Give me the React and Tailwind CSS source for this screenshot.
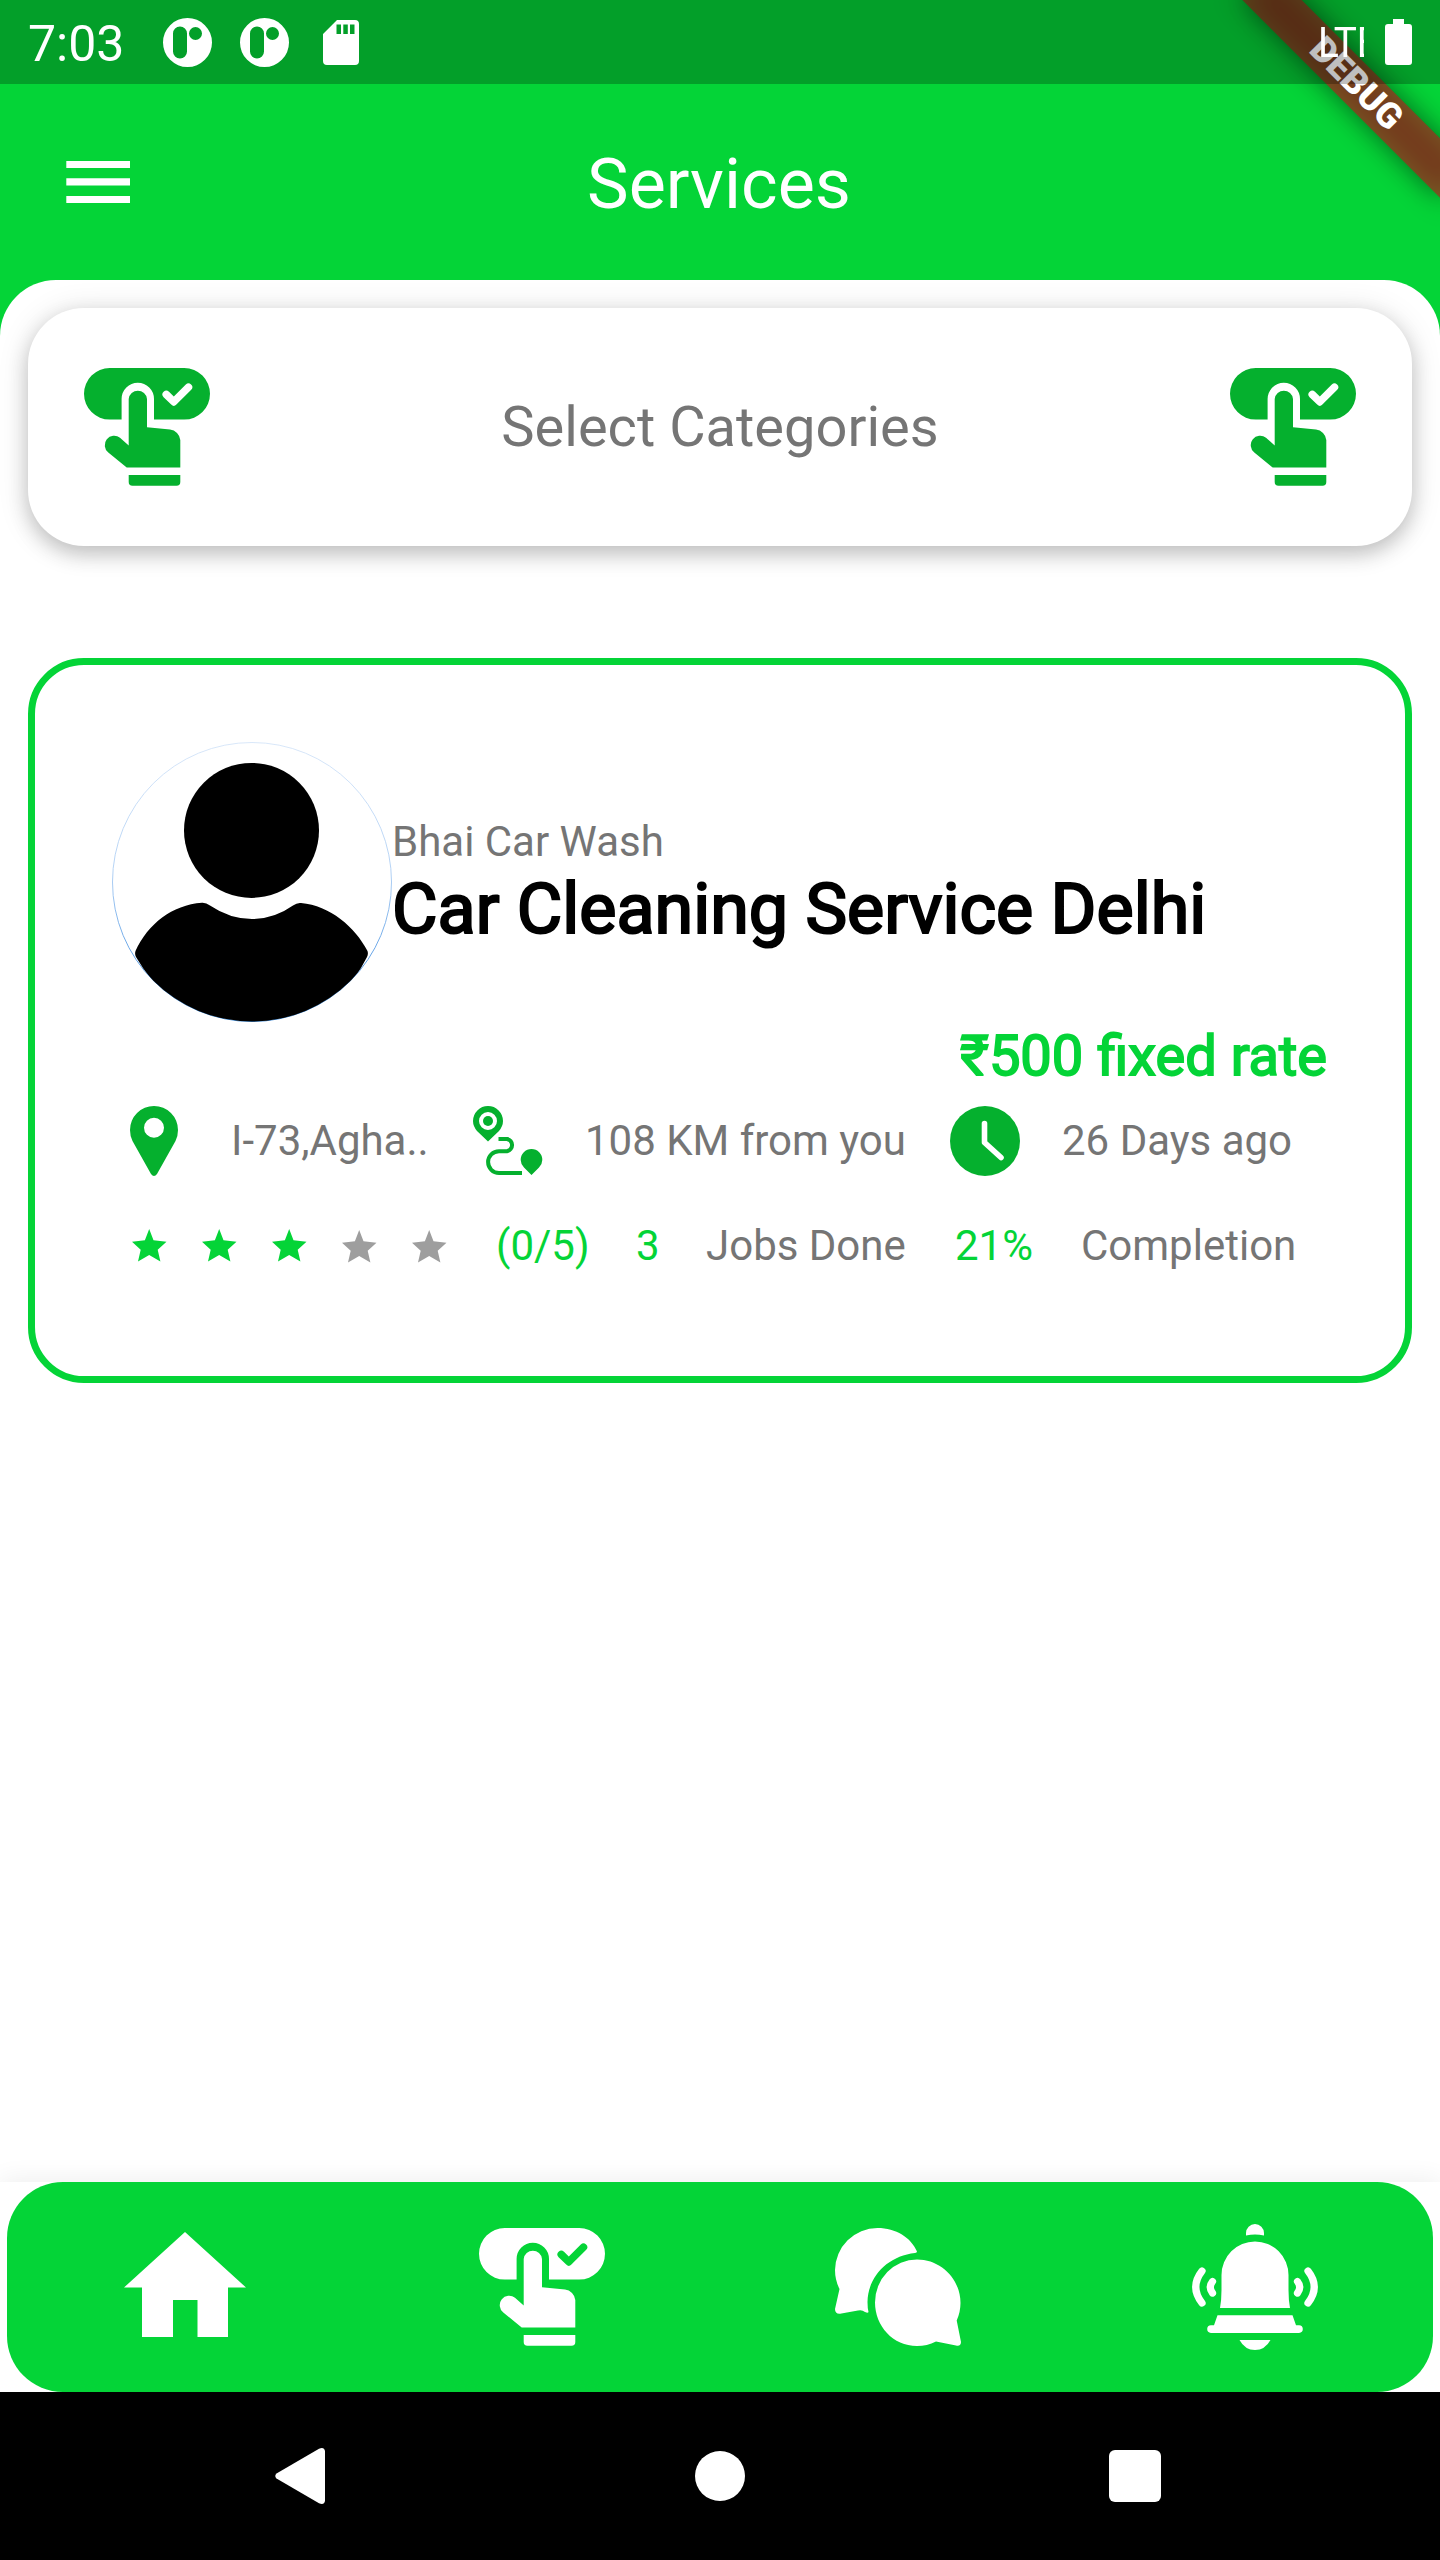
function TapIcon({ className }) {
  return (
    <svg viewBox="0 0 126 126" className={className} fill="currentColor">
      <path
        fillRule="evenodd"
        d="M25.8 4H100.2A25.8 25.8 0 0 1 100.2 55.6H70V35A16.2 16.2 0 0 0 37.6 35V55.6H25.8A25.8 25.8 0 0 1 25.8 4ZM79.600 33.200L87.2 40.600Q89.800 43.200 92.4 40.600L107.200 25.800A3.7 3.7 0 0 0 101.8 20.600L89.800 32.600L85 27.800A3.8 3.8 0 0 0 79.600 33.200Z"
      />
      <path d="M44.7 35A9.2 9.2 0 0 1 63 35V63.300L86 65.600A11.5 11.5 0 0 1 96.3 76V103.600H42.700L24.3 88.500A9.3 9.3 0 0 1 36 73.800L44.7 81.500Z" />
      <path d="M44.7 111H96.3V118A3.8 3.8 0 0 1 92.5 121.800H48.5A3.8 3.8 0 0 1 44.7 118Z" />
    </svg>
  );
}

function NotificationDot() {
  return (
    <svg viewBox="0 0 49 49" className="size-[49px]">
      <path
        fill="#fff"
        fillRule="evenodd"
        d="M24.500 0A24.500 24.500 0 1 1 24.500 49A24.500 24.500 0 1 1 24.500 0ZM10 15.500V33.500A7 7 0 0 0 24 33.500V15.500A7 7 0 0 0 10 15.500ZM32.500 9A6.500 6.500 0 1 0 32.500 22A6.500 6.500 0 1 0 32.500 9Z"
      />
    </svg>
  );
}

function StatusBar() {
  return (
    <div className="relative z-20 flex h-[84px] items-start bg-black/25 text-white">
      <span className="ml-7 mt-[15px] w-[96px] whitespace-nowrap text-[50px] leading-[58px]">7:03</span>
      <div className="ml-[39px] mt-[18px] flex gap-7">
        <NotificationDot />
        <NotificationDot />
      </div>
      <svg viewBox="0 0 36 45" className="ml-[34px] mt-5 h-[45px] w-9">
        <path
          fill="#fff"
          fillRule="evenodd"
          d="M14 0H32A4 4 0 0 1 36 4V41A4 4 0 0 1 32 45H4A4 4 0 0 1 0 41V14ZM13.500 4.500V14H18V4.500ZM20.300 4.500V14H24.800V4.500ZM27 4.500V14H31.500V4.500Z"
        />
      </svg>
      <div className="ml-auto mr-[21px] mt-4 w-[47px] overflow-hidden pl-px">
        <span className="inline-block origin-left scale-x-[0.9] whitespace-nowrap text-[43px] leading-[52px]">LTE</span>
      </div>
      <svg viewBox="0 0 27 46" className="mr-7 mt-[19px] h-[46px] w-[27px]">
        <path fill="#fff" d="M8 0H19V5H24A3 3 0 0 1 27 8V43A3 3 0 0 1 24 46H3A3 3 0 0 1 0 43V8A3 3 0 0 1 3 5H8Z" />
      </svg>
    </div>
  );
}

function DebugRibbon() {
  return (
    <div className="absolute right-0 top-0 z-10 size-[320px] overflow-hidden">
      <div className="absolute left-24 top-[63px] h-[42px] w-[280px] rotate-45 bg-black/50 blur-[14px]" />
      <div className="absolute left-24 top-[63px] flex h-[42px] w-[280px] rotate-45 items-center justify-center bg-[#b71c1c]/63">
        <span className="text-[35.7px] font-black leading-none text-white">DEBUG</span>
      </div>
    </div>
  );
}

function AppBar() {
  return (
    <header className="grid h-[196px] grid-cols-[200px_1fr_202px] items-center text-white">
      <svg viewBox="0 0 64 42" className="ml-[66px] h-[42px] w-16">
        <path fill="#fff" d="M.3 0H64V7H.3ZM.3 17.300H64V24.600H.3ZM.3 35H64V42H.3Z" />
      </svg>
      <h1 className="mt-1 text-center text-[70px] leading-[82px]">Services</h1>
    </header>
  );
}

function CategoryPicker() {
  return (
    <div className="mx-7 flex h-[238px] items-center justify-between rounded-[56px] bg-white px-14 shadow-[0_8px_20px_rgba(0,0,0,0.19),0_3px_32px_rgba(0,0,0,0.12)]">
      <TapIcon className="size-[126px] text-[#05b02e]" />
      <span className="text-[56px] leading-[66px] text-[#757575]">Select Categories</span>
      <TapIcon className="size-[126px] text-[#05b02e]" />
    </div>
  );
}

function Avatar() {
  return (
    <svg viewBox="0 0 280 280" className="size-[280px] shrink-0">
      <defs>
        <linearGradient id="ring" x1="0" y1="0" x2="0" y2="1">
          <stop offset="0" stopColor="#d2e3f8" />
          <stop offset="0.45" stopColor="#a8cbf3" />
          <stop offset="0.8" stopColor="#3f8de0" />
          <stop offset="1" stopColor="#1976d2" />
        </linearGradient>
        <clipPath id="disc">
          <circle cx="140" cy="140" r="139.500" />
        </clipPath>
      </defs>
      <circle cx="140" cy="140" r="139.500" fill="#fff" stroke="url(#ring)" strokeWidth="0.850" />
      <g clipPath="url(#disc)">
        <circle cx="139.500" cy="88.400" r="67.500" />
        <path d="M90 160.800Q94 160.500 98 163.500Q118 177 140 177Q162 177 181 163.500Q185 160.500 189 161C218 163.500 243 185 255.500 209Q256.500 212 255 215Q220 285 140 285Q65 285 24 215Q22.500 212 23.500 209C36 182 60 163 90 160.800Z" />
      </g>
    </svg>
  );
}

function PinIcon() {
  return (
    <svg viewBox="0 0 48 70" className="ml-[18px] h-[70px] w-12" fill="#05b02e">
      <path
        fillRule="evenodd"
        d="M24 0A24 24 0 0 1 48 24Q48 30 45.500 35L27 68Q24 72 21 68L2.500 35Q0 30 0 24A24 24 0 0 1 24 0ZM24 11.700A10 10 0 1 0 24 31.700A10 10 0 1 0 24 11.700Z"
      />
    </svg>
  );
}

function RouteIcon() {
  return (
    <svg viewBox="0 0 70 70" className="size-[70px]" fill="#05b02e">
      <path
        fillRule="evenodd"
        d="M15 0A15 15 0 0 1 30 15Q30 20 26 25L15 35.500L4 25Q0 20 0 15A15 15 0 0 1 15 0ZM15 6A9 9 0 1 0 15 24A9 9 0 1 0 15 6Z"
      />
      <circle cx="15" cy="15" r="5" />
      <path d="M25.500 33H34A6.200 6.200 0 0 1 34 45.200H26A10.800 10.800 0 0 0 26 67H49" fill="none" stroke="#05b02e" strokeWidth="4" />
      <path d="M58.500 43A10.800 10.800 0 0 1 69.300 54Q69.300 58 66 61.500L58.500 69L51 61.500Q47.700 58 47.700 54A10.800 10.800 0 0 1 58.500 43Z" />
    </svg>
  );
}

function ClockIcon() {
  return (
    <svg viewBox="0 0 70 70" className="size-[70px]">
      <circle cx="35" cy="35" r="35" fill="#05b02e" />
      <path d="M34.500 17.500V36.500L51 51.500" fill="none" stroke="#fff" strokeWidth="5.600" strokeLinecap="round" strokeLinejoin="round" />
    </svg>
  );
}

function Star({ filled }) {
  return (
    <svg viewBox="0 0 35 33" className={filled ? "h-[33px] w-[35px] text-[#04d437]" : "mt-px h-[33px] w-[35px] text-[#9e9e9e]"} fill="currentColor">
      <path d="M17.200 0L21.500 11.200L34.500 12.700L25.700 20.700L28.400 32.500L17.200 26L6 32.500L8.700 20.700L0 12.700L12.900 11.200Z" />
    </svg>
  );
}

function ServiceCard() {
  return (
    <article className="mx-7 mt-28 h-[725px] rounded-[56px] border-[7px] border-[#04d437] bg-white px-[77px] pt-[77px] text-[42px] leading-[49px] text-[#757575]">
      <div className="flex items-center">
        <Avatar />
        <div>
          <p>Bhai Car Wash</p>
          <h2 className="-mb-0.5 mt-0.5 whitespace-nowrap text-[70px] leading-[82px] text-black [-webkit-text-stroke:2.2px_#000]">Car Cleaning Service Delhi</h2>
        </div>
      </div>
      <p className="mr-px mt-px text-right text-[56px] leading-[66px] text-[#04d437] [-webkit-text-stroke:1.8px_#04d437]">₹500 fixed rate</p>
      <div className="mt-[17px] flex h-[70px] items-center whitespace-nowrap">
        <PinIcon />
        <span className="-mt-0.5 ml-[53px] w-[242px]">I-73,Agha..</span>
        <RouteIcon />
        <span className="-mt-0.5 ml-[42px] w-[365px]">108 KM from you</span>
        <ClockIcon />
        <span className="-mt-0.5 ml-[42px]">26 Days ago</span>
      </div>
      <div className="mt-[45px] flex h-[49px] items-center whitespace-nowrap">
        <div className="ml-5 flex w-[364px] gap-[35px]">
          <Star filled />
          <Star filled />
          <Star filled />
          <Star />
          <Star />
        </div>
        <span className="w-[140px] text-[#04d437]">(0/5)</span>
        <span className="w-[70px] text-[#04d437]">3</span>
        <span className="w-[249px]">Jobs Done</span>
        <span className="w-[126px] text-[#04d437]">21%</span>
        <span>Completion</span>
      </div>
    </article>
  );
}

function HomeIcon() {
  return (
    <svg viewBox="0 0 122 105" className="-mt-1.5 h-[105px] w-[122px]" fill="#fff">
      <path d="M61 0L122 55.500H104V105H73.500V68H49V105H18V55.500H0Z" />
    </svg>
  );
}

function ChatIcon() {
  return (
    <svg viewBox="0 0 126 118" className="h-[118px] w-[126px]" fill="#fff">
      <path d="M42.500 0C61 0 76 9.500 82 23.500Q82 24.800 80 25C53 28 33 48 32.500 74Q32.500 80 33.500 84Q33 85.300 30 84Q27 81.500 23 82.500L5 85.700Q0 86 0 81L4.500 61Q0 52 0 42A42.500 42.500 0 0 1 42.500 0Z" />
      <path d="M82 31.500C106 31.500 125.500 51 125.500 75Q125.500 84 121.700 92.500L126 114Q126 118.500 121 117.500L101 113.500Q92 118 82 118C58 118 40 98 40 74.500A42 43 0 0 1 82 31.500Z" />
    </svg>
  );
}

function BellIcon() {
  return (
    <svg viewBox="0 0 126 126" className="size-[126px]" fill="#fff">
      <path d="M54 11.500V9A9 9 0 0 1 72 9V11.500Q63 9.500 54 11.500Z" />
      <path d="M63 17.500A33.500 33.500 0 0 1 96.500 51V66Q96.500 76 98 84H28Q29.500 76 29.500 66V51A33.500 33.500 0 0 1 63 17.500Z" />
      <path d="M25.500 91.200H100.500L104 101.300H107A3.800 3.800 0 0 1 107 108.900H19A3.800 3.800 0 0 1 19 101.300H22Z" />
      <path d="M47.500 116H78.500Q73 126 63 126T47.500 116Z" />
      <path d="M10 47Q-2.500 63 10 79M20.500 57.500Q16 63 20.500 69M116 47Q128.500 63 116 79M105.500 57.500Q110 63 105.500 69" fill="none" stroke="#fff" strokeWidth="7.200" strokeLinecap="round" />
    </svg>
  );
}

function BottomBar() {
  return (
    <nav className="flex h-[210px] bg-white px-[7px] shadow-[0_-2px_24px_rgba(0,0,0,0.07)]">
      <div className="grid h-full flex-1 grid-cols-4 place-items-center rounded-[56px] bg-[#04d437]">
        <HomeIcon />
        <TapIcon className="size-[126px] text-white" />
        <ChatIcon />
        <BellIcon />
      </div>
    </nav>
  );
}

function SystemNav() {
  return (
    <footer className="flex h-[168px] items-center bg-black">
      <svg viewBox="0 0 50 56" className="ml-[275px] h-14 w-[50px]">
        <path fill="#fff" d="M44 .8Q49 -1.500 50 3V53Q49 57.500 44 55.200L1.500 30.500Q-1 28 1.500 25.500Z" />
      </svg>
      <div className="ml-[370px] size-[50px] rounded-full bg-white" />
      <div className="ml-[364px] size-[52px] rounded-[6px] bg-white" />
    </footer>
  );
}

export default function App() {
  return (
    <div className="relative flex h-[2560px] w-[1440px] flex-col overflow-hidden bg-[#04d437] font-['Roboto',sans-serif]">
      <DebugRibbon />
      <StatusBar />
      <AppBar />
      <main className="flex-1 rounded-t-[56px] bg-white pt-7">
        <CategoryPicker />
        <ServiceCard />
      </main>
      <BottomBar />
      <SystemNav />
    </div>
  );
}
